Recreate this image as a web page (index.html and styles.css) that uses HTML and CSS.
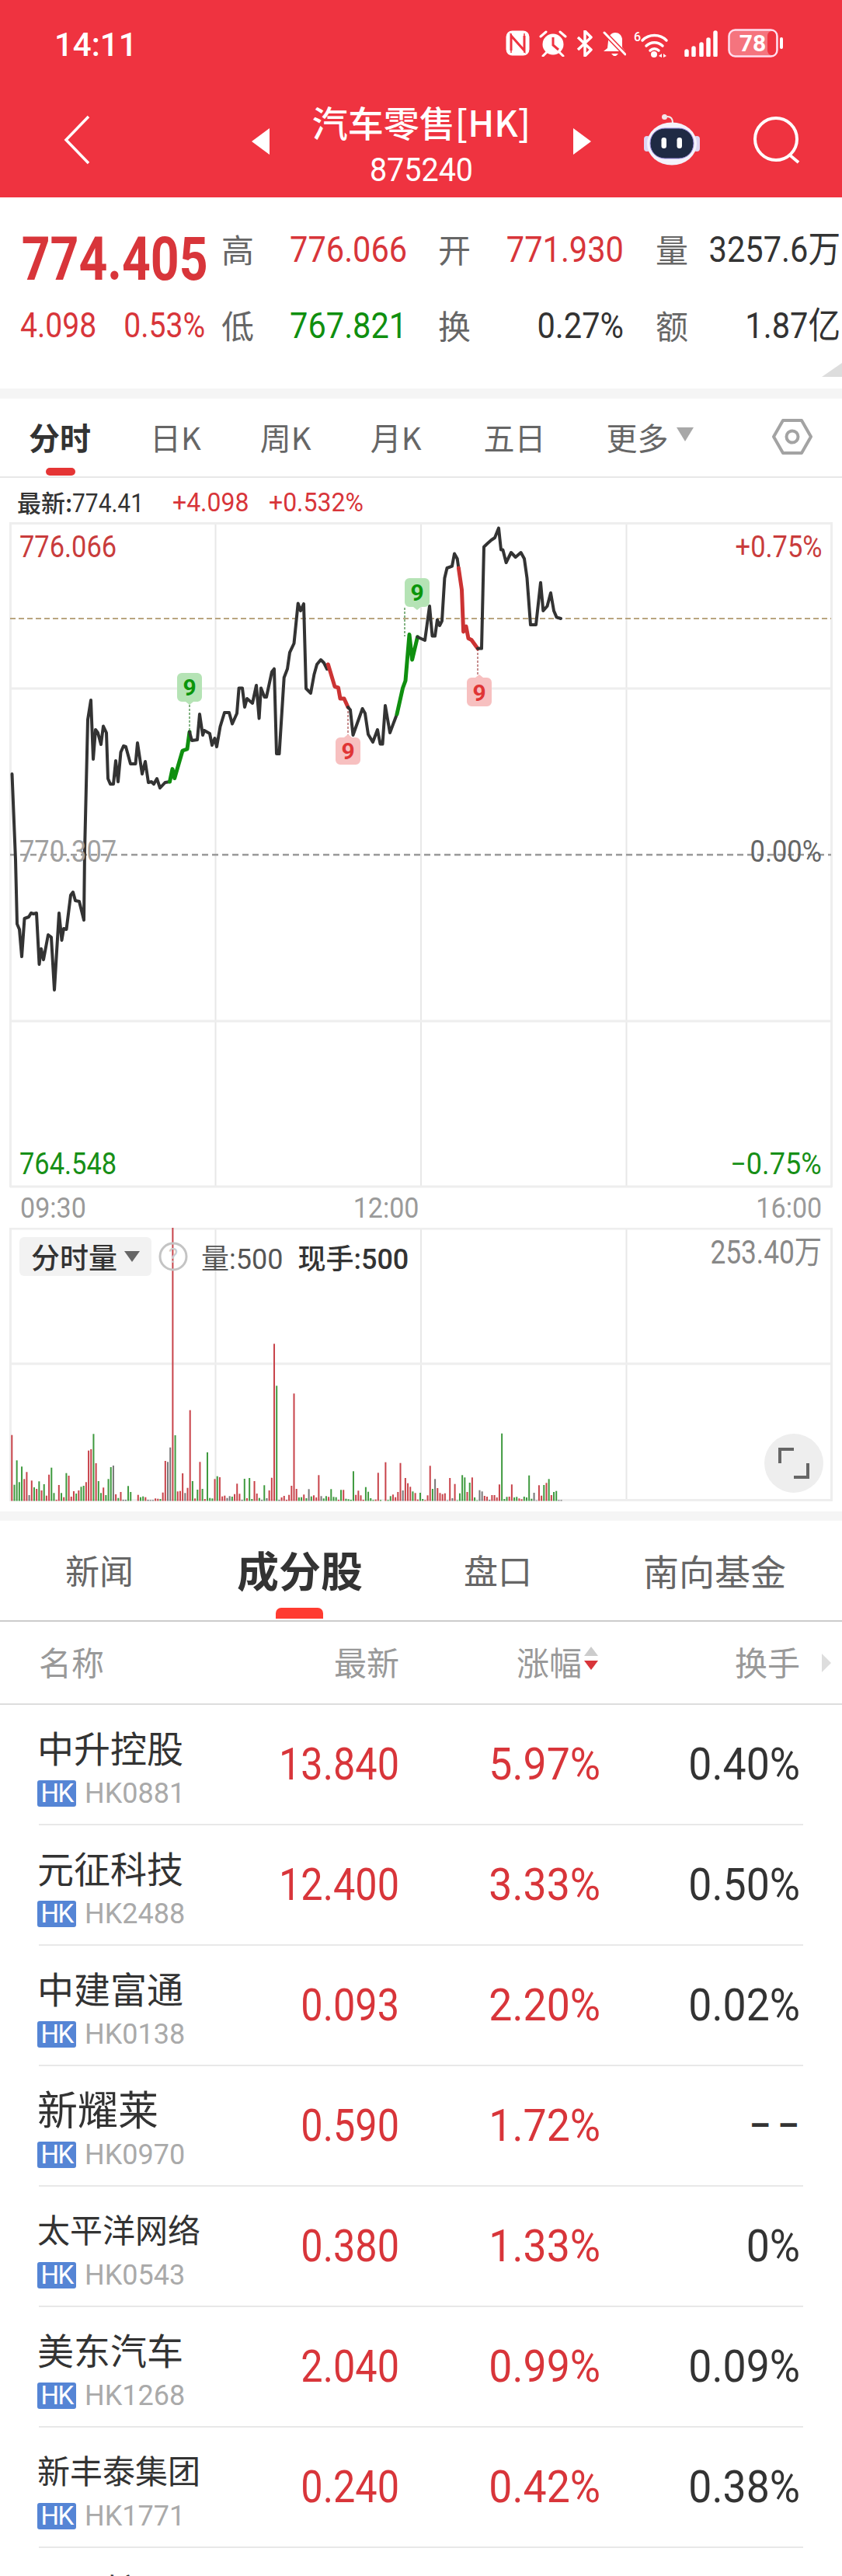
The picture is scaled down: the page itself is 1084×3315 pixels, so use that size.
FILE: index.html
```html
<!DOCTYPE html>
<html lang="zh-CN">
<head>
<meta charset="utf-8">
<title>汽车零售[HK]</title>
<link rel="stylesheet" href="styles.css">
</head>
<body>
<div class="page">
  <header class="top">
    <div class="status">
      <span class="time">14:11</span>
      <div class="status-icons">
        <svg class="ic-nfc" viewBox="0 0 31 33"><rect x="0.5" y="0.5" width="30" height="32" rx="8" fill="#fff"/><path d="M7 26V7l17 19V7" fill="none" stroke="#ef3340" stroke-width="3"/><path d="M7 4v25M24 4v25" stroke="#ef3340" stroke-width="1.5"/></svg>
        <svg class="ic-alarm" viewBox="0 0 36 34"><circle cx="18" cy="18" r="13.5" fill="#fff"/><path d="M18 9v10l7 6" fill="none" stroke="#ef3340" stroke-width="3"/><path d="M2 8l7-6M34 8l-7-6M5 33l5-5M31 33l-5-5" stroke="#fff" stroke-width="3" stroke-linecap="round"/></svg>
        <svg class="ic-bt" viewBox="0 0 22 34"><path d="M2 9l17 16-8 8V1l8 8L2 25" fill="none" stroke="#fff" stroke-width="3.5" stroke-linejoin="round"/></svg>
        <svg class="ic-bell" viewBox="0 0 30 34"><path d="M7 14c0-7 4-11 9-11s8 3 9 8v11l4 5H1l5-4z" fill="#fff"/><path d="M11 30h9l-3 3h-3z" fill="#fff"/><path d="M2 3l27 28" stroke="#ef3340" stroke-width="6"/><path d="M2 3l27 28" stroke="#fff" stroke-width="3" stroke-linecap="round"/></svg>
        <svg class="ic-wifi" viewBox="0 0 48 36"><text class="wifi-six" x="0" y="15">6</text><path d="M11 14a22 22 0 0 1 31 0M16 21a15 15 0 0 1 21 0M21 27a8 8 0 0 1 11 0" fill="none" stroke="#fff" stroke-width="3.5" stroke-linecap="round"/><circle cx="26" cy="32" r="4" fill="#fff"/><path d="M32 34l4-3v5zM38 31l4 3-4 2z" fill="#fff"/></svg>
        <svg class="ic-signal" viewBox="0 0 43 34"><path d="M3 32v-5M12 32v-9M22 32v-14M31 32v-20M40 32V3" stroke="#fff" stroke-width="5.5" stroke-linecap="round"/></svg>
        <svg class="ic-batt" viewBox="0 0 72 37"><rect x="1.5" y="1.5" width="62" height="34" rx="8" fill="#f5747e" stroke="#fde" stroke-width="2.5"/><rect x="51" y="3" width="11" height="31" rx="6" fill="#ef3340"/><path d="M69 13v11" stroke="#fff" stroke-width="4" stroke-linecap="round"/><text class="batt-num" x="32" y="29">78</text></svg>
      </div>
    </div>
    <div class="nav">
      <svg class="back" viewBox="0 0 34 64"><path d="M32 2L3 32l29 30" fill="none" stroke="#fff" stroke-width="3.5"/></svg>
      <span class="tri tri-left"></span>
      <div class="nav-title">
        <div class="title">汽车零售[HK]</div>
        <div class="code">875240</div>
      </div>
      <span class="tri tri-right"></span>
      <svg class="robot" viewBox="0 0 72 66">
        <rect x="0" y="28" width="8" height="20" rx="4" fill="#ddd6f3"/><rect x="64" y="28" width="8" height="20" rx="4" fill="#ddd6f3"/>
        <path d="M30 3Q37 3 37 11" fill="none" stroke="#eee" stroke-width="2"/><circle cx="26.5" cy="3.5" r="3.5" fill="#f3e6ea"/>
        <ellipse cx="36" cy="38" rx="32" ry="27.5" fill="#f4f2fb"/>
        <rect x="8" y="18" width="56" height="39" rx="19" fill="#1f2a44" stroke="#9e8fe0"/>
        <rect x="22.5" y="30" width="6.5" height="14" rx="3.2" fill="#fff"/><rect x="42.5" y="30" width="6.5" height="14" rx="3.2" fill="#fff"/>
      </svg>
      <svg class="search" viewBox="0 0 62 62"><circle cx="30" cy="29" r="27" fill="none" stroke="#fff" stroke-width="4"/><path d="M47 49l12 10" stroke="#fff" stroke-width="4"/></svg>
    </div>
  </header>

  <section class="quote">
    <div class="q-price">774.405</div>
    <div class="q-label">高</div><div class="q-val red">776.066</div>
    <div class="q-label">开</div><div class="q-val red q-mid">771.930</div>
    <div class="q-label">量</div><div class="q-val dark q-end">3257.6万</div>
    <div class="q-change"><span>4.098</span><span>0.53%</span></div>
    <div class="q-label">低</div><div class="q-val green">767.821</div>
    <div class="q-label">换</div><div class="q-val dark q-mid">0.27%</div>
    <div class="q-label">额</div><div class="q-val dark q-end">1.87亿</div>
    <span class="corner"></span>
  </section>
  <div class="band"></div>

  <nav class="tabs">
    <span class="tab active">分时</span>
    <span class="tab">日K</span>
    <span class="tab">周K</span>
    <span class="tab">月K</span>
    <span class="tab tab-five">五日</span>
    <span class="tab tab-more">更多<i class="more-tri"></i></span>
    <svg class="hex" viewBox="0 0 52 48"><path d="M2 24L14 3h24l12 21-12 21H14z" fill="none" stroke="#a3a3a3" stroke-width="4" stroke-linejoin="round"/><circle cx="26" cy="24" r="7.5" fill="none" stroke="#a3a3a3" stroke-width="4"/></svg>
  </nav>

  <div class="latest"><span class="l-dark">最新:<b>774.41</b></span><span class="l-red">+4.098</span><span class="l-red">+0.532%</span></div>

  <div class="chart">
    <svg class="chart-svg" viewBox="0 673 1084 857">
      <g class="grid-v"><path d="M277.5 673V1528M542 673V1528M806.5 673V1528"/></g>
      <g class="grid-h"><path d="M13 674.5H1071M13 887H1071M13 1315H1071M13 1528H1071M13.5 673V1529M1070.5 673V1529"/></g>
      <path class="dash-tan" d="M13 797H1070"/>
      <path class="dash-mid" d="M13 1101H1070"/>
      <path class="mark-g" d="M244 908V943M521 783V820"/>
      <path class="mark-r" d="M448 911V948M615 836V870"/>
      <path class="line" d="M15.5 997L20 1107 22 1190 25 1197 28 1232 31.5 1183 37 1181 40 1176 43 1177 47 1176 50.5 1242 53 1222 56 1236 62 1204 66 1207 70 1275 76 1176 79.5 1211 82 1196 85.5 1197 91 1153 94 1149 97 1160 102 1161 108 1185 109 1097 113 927 117 902 120 978 123 940 126 944 130 959 133 935.5 137 944 139 1003 142 1010 146 1010 149 980 152 1007 155.5 969 159 961 162 962 168 984 174.5 984 177 957 183 997 187 981 191 1008 195 1007 198 1010 202 1003 206 1015 212.5 1008 218.5 1007"/>
      <path class="line-g" d="M218.5 1007L222 990.6 224.7 1002.5 235 967 241 965 244 943"/>
      <path class="line" d="M244 943L247 954 254 953 257 920 261 947 263 941 270 945 273 960 276.5 951 279 962 283.5 936 289 918 295 918 299 932.5 305 919 307.6 886.5 312 886.5 315 911 318 900 325 906 330 883 333.6 925.5 336 886.5 340.5 898 343 898 350 865.5 353 861.7 356 971 359.5 971 365.7 873 370 861.7 373 840.6 378.5 829 383.7 777.5 387 787 391 778 394 887 400 893 404.4 869 408 856 413 850 417 854 421 862"/>
      <path class="line-r" d="M422.4 856L431 884.6 435.5 886 438 900 443 900 448 911"/>
      <path class="line" d="M448 911L451 914.5 454.5 947 466.6 913 470 919 474 946 480 956 486 940 489.5 958.5 492.5 958.5 496 909 502 944 511 920"/>
      <path class="line-g" d="M511 920L518.5 886.5 522 877 527 817.6 530.6 850 537.5 820.7"/>
      <path class="line" d="M537.5 820.7L547 825 553 781 556.5 819.6 560 819.6 563 798.5 566 806 569 800 572.4 745 575.5 732 582 729.6 585 713.5 588.7 720 590.4 732"/>
      <path class="line-r" d="M590.4 732L594.5 760 596.6 814 600 807 603 822.6 607 824.5 615 835.6"/>
      <path class="line" d="M615 835.6L620 835.6 623 704.7 628 700 632.5 696 637 693 642 680.6 645 708.6 647.4 708.6 651.6 725 658 712 663.7 718 670.6 712 675 720 678.5 745 683 805 690 805 696 750.7 699.3 787 704.5 781 709 764 713 787 716.6 795.4 722 797"/>
      <g class="pin-g">
        <path d="M234 867h20a6 6 0 0 1 6 6v25a6 6 0 0 1-6 6h-5l-5 4-5-4h-5a6 6 0 0 1-6-6v-25a6 6 0 0 1 6-6z"/><text x="244" y="896">9</text>
        <path d="M527 745h20a6 6 0 0 1 6 6v25a6 6 0 0 1-6 6h-5l-5 4-5-4h-5a6 6 0 0 1-6-6v-25a6 6 0 0 1 6-6z"/><text x="537" y="774">9</text>
      </g>
      <g class="pin-r">
        <path d="M438 985h20a6 6 0 0 0 6-6v-23a6 6 0 0 0-6-6h-5l-5-4-5 4h-5a6 6 0 0 0-6 6v23a6 6 0 0 0 6 6z"/><text x="448" y="978">9</text>
        <path d="M607 910h20a6 6 0 0 0 6-6v-25a6 6 0 0 0-6-6h-5l-5-4-5 4h-5a6 6 0 0 0-6 6v25a6 6 0 0 0 6 6z"/><text x="617" y="903">9</text>
      </g>
    </svg>
    <span class="c-label c-hi">776.066</span>
    <span class="c-label c-hi-p">+0.75%</span>
    <span class="c-label c-mid">770.307</span>
    <span class="c-label c-mid-p">0.00%</span>
    <span class="c-label c-lo">764.548</span>
    <span class="c-label c-lo-p">−0.75%</span>
  </div>

  <div class="times"><span class="t-a">09:30</span><span class="t-mid">12:00</span><span class="t-z">16:00</span></div>

  <div class="vol">
    <svg class="vol-svg" viewBox="0 1580 1084 352">
      <g class="grid-v"><path d="M277.5 1580V1931M542 1580V1931M806.5 1580V1931"/></g>
      <g class="grid-h"><path d="M13 1581H1071M13 1755H1071M13 1930.5H1071M13.5 1580V1932M1070.5 1580V1932"/></g>
      <g id="vol-bars"></g>
    </svg>
    <div class="vol-head">
      <span class="chip">分时量<i class="chip-tri"></i></span>
      <svg class="help" viewBox="0 0 38 38"><circle cx="19" cy="19" r="17" fill="none" stroke="#c4c4c4" stroke-width="3"/><text x="19" y="27">?</text></svg>
      <span class="v-qty">量:500</span>
      <span class="v-now">现手:500</span>
    </div>
    <span class="v-max">253.40万</span>
    <div class="expand"><svg viewBox="0 0 40 40"><path d="M2 20V2h18M38 20v18H20" fill="none" stroke="#666" stroke-width="4"/></svg></div>
  </div>
  <div class="band band-2"></div>

  <nav class="subtabs">
    <span class="st">新闻</span>
    <span class="st st-active">成分股</span>
    <span class="st st-b">盘口</span>
    <span class="st st-c">南向基金</span>
  </nav>

  <section class="table">
    <div class="thead">
      <span>名称</span>
      <span class="num">最新</span>
      <span class="num sort">涨幅<i class="sort-arrows"><i class="up"></i><i class="down"></i></i></span>
      <span class="num">换手</span>
      <i class="th-more"></i>
    </div>
    <div class="row"><div class="r-name"><div class="nm">中升控股</div><div class="sub"><b class="tag">HK</b><span class="scode">HK0881</span></div></div><div class="n red">13.840</div><div class="n n-p red">5.97%</div><div class="n n-p dark">0.40%</div></div>
    <div class="row"><div class="r-name"><div class="nm">元征科技</div><div class="sub"><b class="tag">HK</b><span class="scode">HK2488</span></div></div><div class="n red">12.400</div><div class="n n-p red">3.33%</div><div class="n n-p dark">0.50%</div></div>
    <div class="row"><div class="r-name"><div class="nm">中建富通</div><div class="sub"><b class="tag">HK</b><span class="scode">HK0138</span></div></div><div class="n red">0.093</div><div class="n n-p red">2.20%</div><div class="n n-p dark">0.02%</div></div>
    <div class="row"><div class="r-name"><div class="nm nm-lg">新耀莱</div><div class="sub"><b class="tag">HK</b><span class="scode">HK0970</span></div></div><div class="n red">0.590</div><div class="n n-p red">1.72%</div><div class="n dark n-dash">––</div></div>
    <div class="row"><div class="r-name"><div class="nm nm-sm">太平洋网络</div><div class="sub"><b class="tag">HK</b><span class="scode">HK0543</span></div></div><div class="n red">0.380</div><div class="n n-p red">1.33%</div><div class="n n-p dark">0%</div></div>
    <div class="row"><div class="r-name"><div class="nm">美东汽车</div><div class="sub"><b class="tag">HK</b><span class="scode">HK1268</span></div></div><div class="n red">2.040</div><div class="n n-p red">0.99%</div><div class="n n-p dark">0.09%</div></div>
    <div class="row"><div class="r-name"><div class="nm nm-sm">新丰泰集团</div><div class="sub"><b class="tag">HK</b><span class="scode">HK1771</span></div></div><div class="n red">0.240</div><div class="n n-p red">0.42%</div><div class="n n-p dark">0.38%</div></div>
    <div class="row"><div class="r-name"><div class="nm">G.A.控股</div></div></div>
  </section>
</div>
<script src="chart.js"></script>
</body>
</html>
```
FILE: styles.css
```css
* { box-sizing: border-box; }
html, body { margin: 0; padding: 0; background: #fff; }
body { font-family: "Noto Sans CJK SC", "Liberation Sans", sans-serif; color: #333; }
i { font-style: normal; }
.page { width: 1084px; height: 3315px; overflow: hidden; position: relative; }
.red { color: #d8353a; }
.green { color: #0f8f0f; }
.dark { color: #333; }

/* header */
.top { background: #ef3340; height: 254px; color: #fff; }
.status { height: 115px; display: flex; align-items: flex-start; padding: 0 0 0 70px; }
.time { font: 500 42px/1 Roboto, sans-serif; margin-top: 37px; }
.status-icons { margin-left: auto; padding: 38px 75px 0 0; display: flex; align-items: center; height: 73px; }
.status-icons svg { display: block; flex: none; }
.ic-nfc { width: 31px; height: 33px; }
.ic-alarm { width: 36px; height: 34px; margin-left: 12px; }
.ic-bt { width: 22px; height: 34px; margin-left: 12px; }
.ic-bell { width: 30px; height: 34px; margin-left: 12px; }
.ic-wifi { width: 48px; height: 36px; margin-left: 10px; }
.ic-signal { width: 43px; height: 34px; margin-left: 17px; }
.ic-batt { width: 72px; height: 37px; margin-left: 13px; }
.wifi-six { font: 500 16px Roboto, sans-serif; fill: #fff; }
.batt-num { font: 700 30px Roboto, sans-serif; fill: #fff; text-anchor: middle; }
.nav { height: 139px; display: flex; align-items: flex-start; padding-left: 82px; }
.back { width: 34px; height: 64px; margin-top: 33px; flex: none; }
.tri { width: 0; height: 0; border-top: 17px solid transparent; border-bottom: 17px solid transparent; margin-top: 50px; flex: none; }
.tri-left { border-right: 23px solid #fff; margin-left: 208px; }
.tri-right { border-left: 23px solid #fff; }
.nav-title { width: 391px; text-align: center; }
.title { font-size: 46px; line-height: 46px; font-weight: 500; margin-top: 18px; }
.code { font: 400 42px/40px Roboto, sans-serif; margin-top: 20px; transform: scaleX(0.94); }
.robot { width: 72px; height: 66px; margin: 32px 0 0 68px; flex: none; }
.search { width: 62px; height: 62px; margin: 35px 0 0 68px; flex: none; }

/* quote: the numerals in the reference are a condensed cut, so they are narrowed here */
.quote { height: 246px; padding: 17px 0 0 26px; display: grid; grid-template-columns: 259px 88px 191px 89px 191px 41px 197px; grid-template-rows: 98px 98px; align-items: center; position: relative; }
.q-price { font: 700 77px/1 Roboto, sans-serif; color: #d8353a; padding: 28px 0 0 2px; transform: scaleX(0.835); transform-origin: left center; white-space: nowrap; }
.q-change { font: 400 45px/1 Roboto, sans-serif; color: #d8353a; display: flex; gap: 40px; transform: scaleX(0.87); transform-origin: left center; white-space: nowrap; }
.q-label { font-size: 42px; line-height: 1; color: #666; }
.q-val { font: 400 47px/1 Roboto, "Noto Sans CJK SC", sans-serif; white-space: nowrap; transform: scaleX(0.885); transform-origin: left center; }
.q-mid { text-align: right; transform-origin: right center; margin: 0 41px 0 -40px; }
.q-end { text-align: right; transform-origin: right center; }
.corner { position: absolute; right: 0; bottom: 15px; width: 0; height: 0; border-left: 26px solid transparent; border-bottom: 18px solid #ddd; }
.band { height: 13px; background: #f5f5f5; }

/* tabs */
.tabs { height: 102px; display: flex; align-items: center; padding: 0 38px 2px 37px; gap: 76px; border-bottom: 2px solid #e8e8e8; position: relative; }
.tab { font-size: 40px; line-height: 1; color: #666; position: relative; white-space: nowrap; }
.tab.active { font-weight: 700; color: #333; }
.tab.active::after { content: ""; position: absolute; left: 22px; width: 38px; top: 60px; height: 10px; border-radius: 5px; background: #e53535; }
.tab-five { margin-left: 4px; }
.tab-more { margin-left: 2px; display: flex; align-items: center; }
.more-tri { width: 0; height: 0; margin-left: 10px; margin-top: -6px; border-left: 11px solid transparent; border-right: 11px solid transparent; border-top: 18px solid #a8a8a8; }
.hex { width: 52px; height: 48px; margin-left: auto; flex: none; }

.latest { height: 57px; padding: 13px 0 0 22px; display: flex; font: 400 34px/36px Roboto, sans-serif; white-space: nowrap; }
.l-dark { width: 200px; font-family: "Noto Sans CJK SC", sans-serif; font-size: 31px; font-weight: 500; color: #333; }
.l-dark b { display: inline-block; font: 400 34px/36px Roboto, sans-serif; transform: scaleX(0.88); transform-origin: left center; }
.l-red { width: 124px; color: #d8353a; transform: scaleX(0.94); transform-origin: left center; }

/* chart */
.chart { height: 857px; position: relative; }
.chart-svg { display: block; width: 1084px; height: 857px; }
.grid-v path { stroke: #e8e8e8; stroke-width: 2; fill: none; }
.grid-h path { stroke: #eee; stroke-width: 3; fill: none; }
.dash-tan { stroke: #b9a57f; stroke-width: 2; stroke-dasharray: 7 4; fill: none; }
.dash-mid { stroke: #999; stroke-width: 2.5; stroke-dasharray: 8 5; fill: none; }
.mark-g { stroke: #5b9b5b; stroke-width: 1.5; stroke-dasharray: 3 2; fill: none; }
.mark-r { stroke: #b56a6a; stroke-width: 1.5; stroke-dasharray: 3 2; fill: none; }
.line, .line-g, .line-r { fill: none; stroke-linejoin: round; stroke-linecap: round; }
.line { stroke: #333; stroke-width: 4; }
.line-g { stroke: #0f8f0f; stroke-width: 5; }
.line-r { stroke: #cc3333; stroke-width: 5; }
.pin-g path { fill: #b5e3b5; }
.pin-g text { fill: #0a960a; }
.pin-r path { fill: #f7c0c0; }
.pin-r text { fill: #e03535; }
.pin-g text, .pin-r text { font: 700 30px Roboto, sans-serif; text-anchor: middle; }
.c-label { position: absolute; font: 400 38px/40px Roboto, sans-serif; white-space: nowrap; transform: scaleX(0.906); transform-origin: left center; }
.c-hi { left: 25px; top: 12px; color: #c93c3c; }
.c-hi-p { right: 26px; top: 12px; color: #c93c3c; transform-origin: right center; }
.c-mid { left: 25px; top: 404px; color: #a0a0a0; }
.c-mid-p { right: 26px; top: 404px; color: #666; transform-origin: right center; }
.c-lo { left: 25px; top: 806px; color: #178f17; }
.c-lo-p { right: 26px; top: 806px; color: #178f17; transform: scaleX(0.95); transform-origin: right center; }

.times { height: 51px; display: flex; padding: 7px 26px 0; font: 400 37px/38px Roboto, sans-serif; color: #9a9a9a; justify-content: space-between; }
.times span { transform: scaleX(0.92); }
.times .t-a { transform-origin: left center; }
.times .t-z { transform-origin: right center; }
.t-mid { margin-right: 90px; }

/* volume */
.vol { height: 352px; position: relative; }
.vol-svg { display: block; width: 1084px; height: 352px; }
#vol-bars .r { fill: #c8434a; }
#vol-bars .g { fill: #3f9a3f; }
#vol-bars .k { fill: #777; }
.vol-head { position: absolute; left: 25px; top: 12px; display: flex; align-items: center; height: 50px; }
.chip { width: 170px; height: 50px; background: #f2f2f2; border-radius: 6px; font-size: 37px; line-height: 50px; font-weight: 500; padding-left: 15px; display: flex; align-items: center; }
.chip-tri { width: 0; height: 0; margin-left: 9px; border-left: 10px solid transparent; border-right: 10px solid transparent; border-top: 14px solid #666; }
.help { width: 38px; height: 38px; margin-left: 9px; }
.help text { font: 400 26px Roboto, sans-serif; fill: #ccc; text-anchor: middle; }
.v-qty, .v-now { font: 400 36px Roboto, "Noto Sans CJK SC", sans-serif; margin-left: 17px; color: #555; white-space: nowrap; }
.v-now { color: #333; font-weight: 500; font-size: 36px; margin-left: 19px; }
.v-max { position: absolute; right: 26px; top: 10px; font: 400 42px/44px Roboto, "Noto Sans CJK SC", sans-serif; color: #888; transform: scaleX(0.84); transform-origin: right center; }
.expand { position: absolute; left: 984px; top: 265px; width: 76px; height: 76px; border-radius: 50%; background: #eee; display: flex; align-items: center; justify-content: center; }
.expand svg { width: 40px; height: 40px; }
.band-2 { height: 12px; margin-top: 13px; }

/* sub tabs */
.subtabs { height: 130px; display: flex; align-items: center; padding: 0 0 2px 84px; border-bottom: 2px solid #ccc; font-size: 44px; color: #666; }
.st { line-height: 1; white-space: nowrap; position: relative; }
.st-active { font-size: 54px; font-weight: 700; color: #333; margin-left: 133px; }
.st-active::after { content: ""; position: absolute; left: 50px; width: 61px; height: 14px; top: 76px; background: #ff3b30; border-radius: 7px 7px 0 0; }
.st-b { margin-left: 130px; }
.st-c { margin-left: 143px; font-size: 46px; }

/* table */
.thead { height: 107px; display: grid; grid-template-columns: 200px 264px 259px 257px; padding-left: 50px; align-items: center; border-bottom: 2px solid #ddd; font-size: 42px; color: #999; position: relative; padding-bottom: 4px; }
.num { text-align: right; }
.sort { position: relative; padding-right: 21px; margin-left: -3px; transform: translateX(-3px); }
.sort-arrows { position: absolute; right: 0; top: 12px; width: 18px; height: 30px; }
.sort-arrows .up, .sort-arrows .down { position: absolute; left: 0; width: 0; height: 0; border-left: 9px solid transparent; border-right: 9px solid transparent; }
.sort-arrows .up { top: 0; border-bottom: 12px solid #ccc; }
.sort-arrows .down { top: 18px; border-top: 12px solid #d8353a; }
.th-more { position: absolute; left: 1058px; top: 41px; width: 0; height: 0; border-top: 12px solid transparent; border-bottom: 12px solid transparent; border-left: 12px solid #ddd; }
.row { height: 155px; margin: 0 50px; display: grid; grid-template-columns: 200px 264px 259px 257px; align-items: center; border-bottom: 2px solid #e8e8e8; }
.r-name { align-self: start; padding-top: 29px; margin-left: -2px; }
.nm { font-size: 47px; line-height: 50px; color: #333; white-space: nowrap; }
.nm-lg { font-size: 52px; }
.nm-sm { font-size: 42px; }
.sub { display: flex; margin-top: 18px; align-items: center; }
.tag { flex: none; width: 50px; height: 34px; background: #5585d5; color: #fff; border-radius: 3px; font: 400 33px/34px Roboto, sans-serif; text-align: center; letter-spacing: -1.5px; }
.scode { font: 400 36px/34px Roboto, sans-serif; color: #aaa; margin-left: 11px; }
.n { font: 400 57px/1 Roboto, sans-serif; text-align: right; white-space: nowrap; transform: scaleX(0.885); transform-origin: right center; }
.n-p { transform: scaleX(0.94); }
.n-dash { font-size: 42px; font-weight: 700; letter-spacing: 10px; transform: none; margin-right: -8px; }
```
FILE: chart.js
```js
var DATA = "440r 632g 538g 622g 562g 610r 583r 672k 616r 642g 648r 619g 654r 630g 674r 593r 566g 664g 690r 633r 664g 680r 587g 597r 678r 657r 666g 654r 640g 636g 622r 500r 495r 436g 549r 618g 664g 643r 672g 610g 564g 558k 669r 683g 660r 690k 690k 637g 660g 696k 696k 671r 680g 677g 680r 690k 691k 691k 685r 686r 687g 662r 540r 544k 488k -360r 441g 658r 656r 588r 664k 644r 344r 618g 685r 651g 544r 648g 687r 507g 683g 685g 610r 599g 603r 677r 674r 683k 676k 678g 668r 628r 667r 690k 609g 684r 606g 687g 618r 666r 683g 690k 634g 684k 654r 605r 88r 250g 690k 681r 675r 690r 671r 636r 280r 648r 681g 680g 670r 684g 649k 677g 673r 681r 595r 676k 685g 676g 679r 649g 679g 680g 690r 652g 652r 686g 688g 690g 580g 671r 655r 673r 690r 641g 659g 684g 691g 689r 586r 691g 696k 545r 691g 676g 670r 680r 660r 548r 654k 606r 626r 640r 658g 664r 689r 663g 687g 691r 673r 559r 648g 610k 645r 664r 668r 665r 692k 606r 684k 629r 692g 665g 595g 604g 660r 624g 604r 681g 692g 653k 658k 675r 678r 690k 672r 672r 681r 631r 434g 687g 679g 678r 631r 681g 679g 685r 688r 678g 681g 596g 686g 663k 692k 634r 674r 633g 625r 610g 672r 660g 656g 691k 691k".split(" ");
var NS = "http://www.w3.org/2000/svg";
var group = document.getElementById("vol-bars");
DATA.forEach(function (item, i) {
  var top = parseInt(item, 10);
  if (top >= 695) return;
  var y = 1700 + top / 3;
  var rect = document.createElementNS(NS, "rect");
  rect.setAttribute("x", (14.3 + 3.186 * i).toFixed(2));
  rect.setAttribute("y", y.toFixed(1));
  rect.setAttribute("width", "2");
  rect.setAttribute("height", (1931.5 - y).toFixed(1));
  rect.setAttribute("class", item.slice(-1));
  group.appendChild(rect);
});
```
